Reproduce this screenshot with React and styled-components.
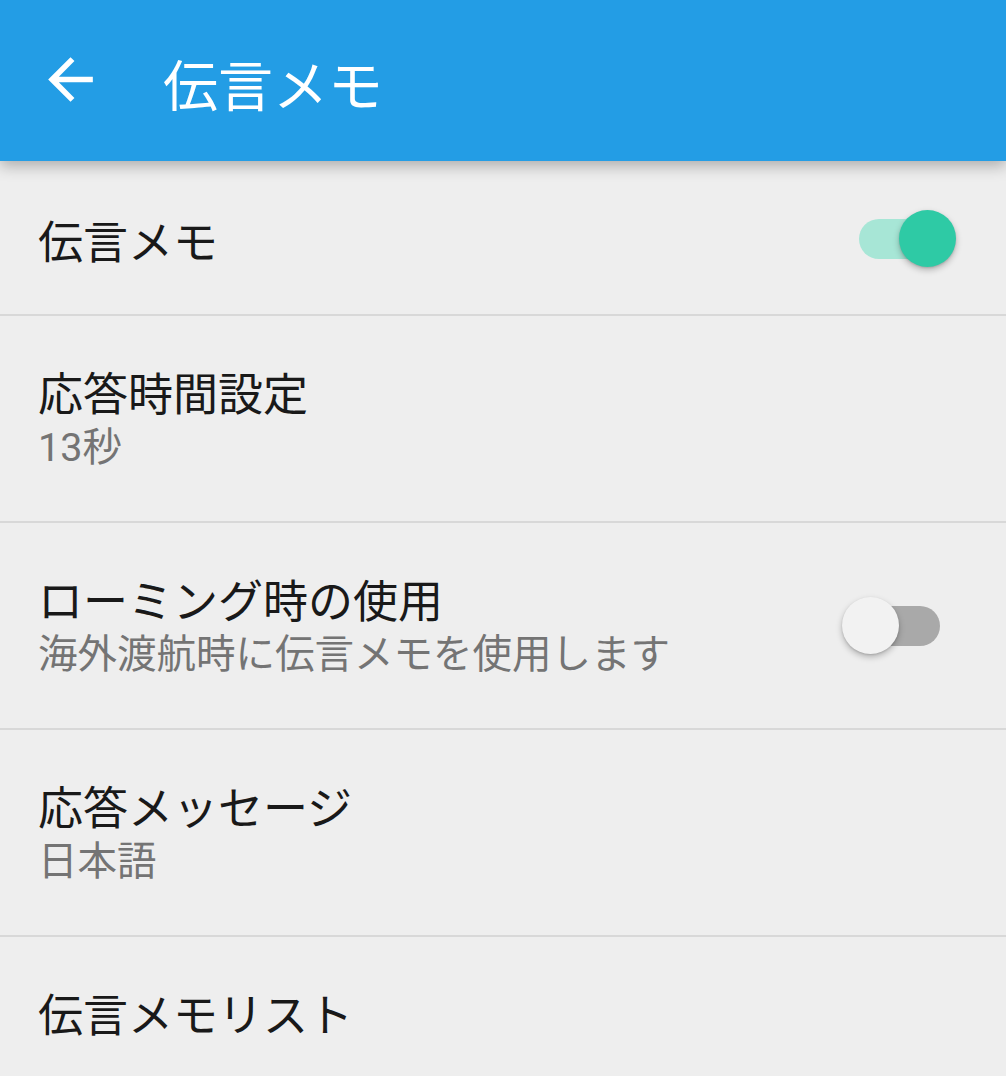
import React from 'react';
import styled, { createGlobalStyle } from 'styled-components';

const GlobalStyle = createGlobalStyle`
  html, body {
    margin: 0;
    padding: 0;
    background: #eeeeee;
  }
  body {
    font-family: Roboto, "Noto Sans CJK JP", "Noto Sans", sans-serif;
  }
`;

const Screen = styled.div`
  width: 1006px;
  min-height: 1076px;
  background: #eeeeee;
  overflow: hidden;
`;

const AppBar = styled.header`
  position: relative;
  z-index: 1;
  height: 161px;
  background: #239de5;
  display: flex;
  align-items: center;
  padding-left: 37px;
  box-shadow: 0 5px 14px rgba(0, 0, 0, 0.28);
`;

const BackButton = styled.button`
  width: 67px;
  height: 67px;
  padding: 0;
  border: none;
  background: none;
  display: flex;
  align-items: center;
  justify-content: center;
  color: #ffffff;
  margin-top: -2px;

  svg {
    width: 67px;
    height: 67px;
    fill: currentColor;
  }
`;

const AppTitle = styled.h1`
  margin: 4px 0 0 59px;
  font-family: "Noto Sans CJK JP", sans-serif;
  font-size: 55px;
  font-weight: 400;
  color: #ffffff;
  line-height: 1;
`;

const List = styled.ul`
  list-style: none;
  margin: 0;
  padding: 0;
`;

const Row = styled.li`
  display: flex;
  align-items: center;
  justify-content: space-between;
  padding: ${({ $first }) => ($first ? '50px' : '48px')} 49px 45px 38px;
  border-top: ${({ $first }) => ($first ? 'none' : '2px solid #d8d8d8')};
`;

const TextBlock = styled.div`
  display: flex;
  flex-direction: column;
`;

const Title = styled.div`
  font-family: "Noto Sans CJK JP", sans-serif;
  font-size: 45px;
  line-height: 56px;
  color: #191919;
`;

const Summary = styled.div`
  font-family: Roboto, "Noto Sans CJK JP", sans-serif;
  font-size: 39.5px;
  line-height: 56px;
  color: #747474;
`;

const Switch = styled.div`
  position: relative;
  width: 115px;
  height: 58px;
  flex-shrink: 0;
`;

const Track = styled.div`
  position: absolute;
  left: 17px;
  top: 8px;
  width: 81px;
  height: 40px;
  border-radius: 20px;
  background: ${({ $on }) => ($on ? '#a7e6d6' : '#a9a9a9')};
`;

const Thumb = styled.div`
  position: absolute;
  top: -1px;
  left: ${({ $on }) => ($on ? '57px' : '0')};
  width: 57px;
  height: 57px;
  border-radius: 50%;
  background: ${({ $on }) => ($on ? '#2ecaa5' : '#f2f2f2')};
  box-shadow: 0 3px 6px rgba(0, 0, 0, 0.25), 0 1px 2px rgba(0, 0, 0, 0.12);
`;

const Toggle = ({ on }) => (
  <Switch>
    <Track $on={on} />
    <Thumb $on={on} />
  </Switch>
);

const items = [
  { title: '伝言メモ', toggle: true },
  { title: '応答時間設定', summary: '13秒' },
  { title: 'ローミング時の使用', summary: '海外渡航時に伝言メモを使用します', toggle: false },
  { title: '応答メッセージ', summary: '日本語' },
  { title: '伝言メモリスト' },
];

const App = () => {
  return (
    <Screen>
      <GlobalStyle />
      <AppBar>
        <BackButton aria-label="戻る">
          <svg viewBox="0 0 24 24">
            <path d="M20 11H7.83l5.59-5.59L12 4l-8 8 8 8 1.41-1.41L7.83 13H20v-2z" />
          </svg>
        </BackButton>
        <AppTitle>伝言メモ</AppTitle>
      </AppBar>

      <List>
        {items.map((item, i) => (
          <Row key={item.title + i} $first={i === 0}>
            <TextBlock>
              <Title>{item.title}</Title>
              {item.summary && <Summary>{item.summary}</Summary>}
            </TextBlock>
            {item.toggle !== undefined && <Toggle on={item.toggle} />}
          </Row>
        ))}
      </List>
    </Screen>
  );
};

export default App;
